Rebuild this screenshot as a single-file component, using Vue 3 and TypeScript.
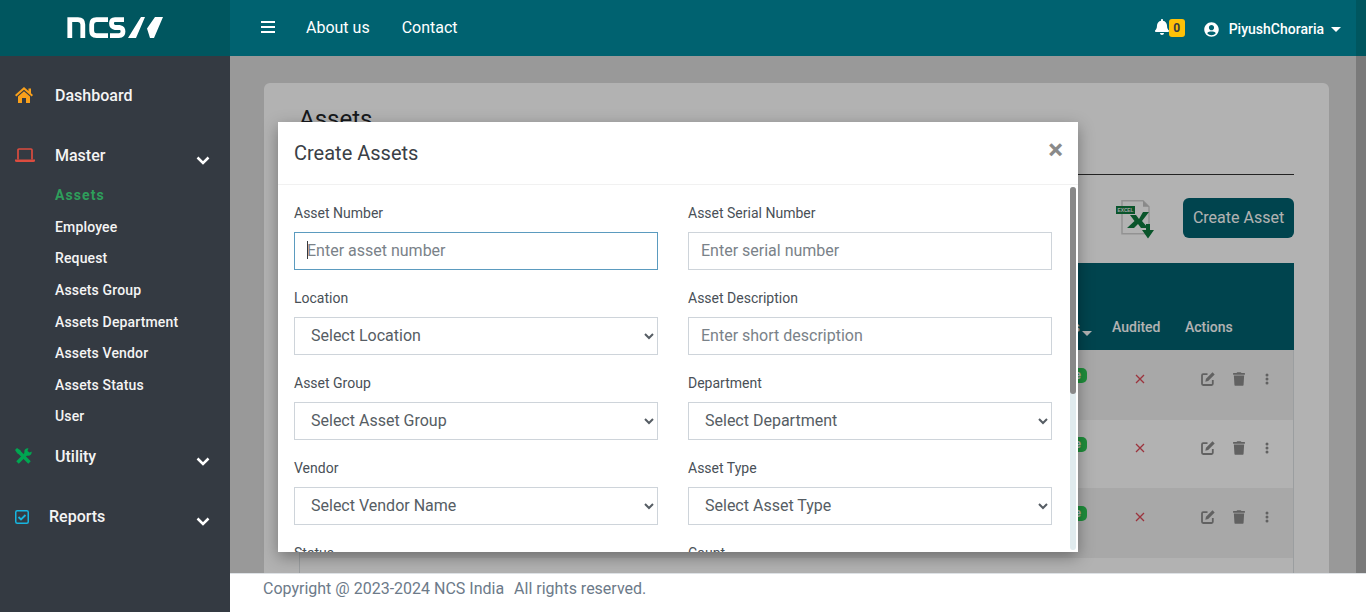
<script setup lang="ts">
const subItems = ['Assets', 'Employee', 'Request', 'Assets Group', 'Assets Department', 'Assets Vendor', 'Assets Status', 'User']

interface Field {
  label: string
  kind: 'input' | 'select'
  text: string
  focused?: boolean
}

const fields: Field[] = [
  { label: 'Asset Number', kind: 'input', text: 'Enter asset number', focused: true },
  { label: 'Asset Serial Number', kind: 'input', text: 'Enter serial number' },
  { label: 'Location', kind: 'select', text: 'Select Location' },
  { label: 'Asset Description', kind: 'input', text: 'Enter short description' },
  { label: 'Asset Group', kind: 'select', text: 'Select Asset Group' },
  { label: 'Department', kind: 'select', text: 'Select Department' },
  { label: 'Vendor', kind: 'select', text: 'Select Vendor Name' },
  { label: 'Asset Type', kind: 'select', text: 'Select Asset Type' },
  { label: 'Status', kind: 'select', text: 'Select Status' },
  { label: 'Count', kind: 'input', text: 'Enter count' },
]

const rows = [1, 2, 3]
</script>

<template>
  <div class="app">
    <aside class="sidebar">
      <div class="brand">
        <svg class="logo" width="100" height="26" viewBox="66 15 100 26" aria-label="NCS">
          <g fill="none" stroke="#fff" stroke-width="4.800">
            <path d="M69.800 38V19.600H78Q82.800 19.600 82.800 24.500V38" />
            <path d="M108 19.600H96.500Q91.700 19.600 91.700 24.500V31Q91.700 35.600 96.500 35.600H108" />
            <path d="M124 19.600H115Q111.500 19.600 111.500 23.300Q111.500 27 115 27.500H120Q123 28 123 31.500Q123 35.600 119 35.600H110" />
          </g>
          <path fill="#fff" d="M128 38 141 17h4l-9 21zM147 28.500 155 17h8l-9 21h-4z" />
        </svg>
      </div>
      <nav class="nav">
        <a class="nav-item">
          <span class="nav-icon">
            <svg width="18" height="16" viewBox="0 0 18 16"><path fill="#f9a01b" d="M9 0 13.500 4V1.500H16V6.200L18 8 16.700 9.500 9 2.800 1.300 9.500 0 8zM3 9.400 9 4.200 15 9.400V16H11V11H7V16H3z" /></svg>
          </span>
          <span>Dashboard</span>
        </a>
        <a class="nav-item">
          <span class="nav-icon">
            <svg width="20" height="15" viewBox="0 0 20 15"><path fill="none" stroke="#dc4c3f" stroke-width="1.700" d="M3 11.500V2q0-1 1-1h12q1 0 1 1v9.500" /><path fill="#dc4c3f" d="M0 11.500h20v1q0 1.500-1.500 1.500h-17Q0 14 0 12.500z" /></svg>
          </span>
          <span>Master</span>
          <svg class="chev" width="14" height="9" viewBox="0 0 14 9"><path fill="none" stroke="#fff" stroke-width="2.500" d="M1.500 1.500 7 7l5.500-5.500" /></svg>
        </a>
        <ul class="sub">
          <li v-for="(s, i) in subItems" :key="s" :class="{ active: i === 0 }">{{ s }}</li>
        </ul>
        <a class="nav-item nav-util">
          <span class="nav-icon">
            <svg width="17" height="17" viewBox="0 0 17 17">
              <g fill="none" stroke="#00a651" stroke-width="3.600">
                <path d="M2.500 2.500 14.500 14.500" />
                <path d="M2.500 14.500 11.500 5.500" />
              </g>
              <path fill="#00a651" d="M0 2 2 0 5.500 2.500 6 5 5 6 2.500 5.500z" />
              <circle cx="13" cy="4" r="3.700" fill="#00a651" />
              <path fill="#343a42" d="M13.500 0 H17 V3.500 L14.500 4.500 12.500 3z" />
            </svg>
          </span>
          <span>Utility</span>
          <svg class="chev" width="14" height="9" viewBox="0 0 14 9"><path fill="none" stroke="#fff" stroke-width="2.500" d="M1.500 1.500 7 7l5.500-5.500" /></svg>
        </a>
        <a class="nav-item nav-reports">
          <span class="nav-icon">
            <svg width="14" height="14" viewBox="0 0 14 14"><rect x=".75" y=".75" width="12.500" height="12.500" rx="1.500" fill="none" stroke="#17b5e0" stroke-width="1.500" /><path fill="none" stroke="#17b5e0" stroke-width="1.800" d="m3.500 7 2.500 2.500L10.500 5" /></svg>
          </span>
          <span>Reports</span>
          <svg class="chev" width="14" height="9" viewBox="0 0 14 9"><path fill="none" stroke="#fff" stroke-width="2.500" d="M1.500 1.500 7 7l5.500-5.500" /></svg>
        </a>
      </nav>
    </aside>

    <div class="right">
      <div class="upper">
        <div class="upper-col">
          <header class="topbar">
            <span class="burger"><i></i><i></i><i></i></span>
            <a class="top-link first">About us</a>
            <a class="top-link">Contact</a>
            <span class="top-right">
              <svg width="14" height="16" viewBox="0 0 448 512"><path fill="#fff" d="M224 512c35.320 0 63.970-28.650 63.970-64H160.030c0 35.350 28.650 64 63.970 64zm215.390-149.710c-19.320-20.760-55.470-51.990-55.470-154.290 0-77.700-54.480-139.900-127.940-155.160V32c0-17.670-14.320-32-31.980-32s-31.980 14.330-31.980 32v20.840C118.560 68.100 64.080 130.300 64.080 208c0 102.300-36.150 133.530-55.470 154.290-6 6.450-8.660 14.160-8.610 21.710.11 16.400 12.980 32 32.100 32h383.800c19.120 0 32-15.600 32.100-32 .05-7.550-2.610-15.270-8.610-21.710z" /></svg>
              <span class="badge">0</span>
              <svg class="user-icon" width="15" height="15" viewBox="0 0 496 512"><path fill="#fff" d="M248 8C111 8 0 119 0 256s111 248 248 248 248-111 248-248S385 8 248 8zm0 96c48.600 0 88 39.400 88 88s-39.400 88-88 88-88-39.400-88-88 39.400-88 88-88zm0 344c-58.700 0-111.300-26.600-146.500-68.200 18.800-35.400 55.600-59.800 98.500-59.800 2.400 0 4.800.4 7.100 1.100 13 4.200 26.600 6.900 40.900 6.900 14.300 0 28-2.700 40.900-6.900 2.300-.7 4.700-1.100 7.100-1.100 42.900 0 79.700 24.400 98.500 59.800C359.300 421.400 306.700 448 248 448z" /></svg>
              <span class="user-name">PiyushChoraria</span>
              <span class="user-caret"></span>
            </span>
          </header>

          <main class="main">
            <section class="card">
              <h1 class="title">Assets</h1>
              <hr class="rule" />
              <div class="tools">
                <svg class="excel" width="40" height="39" viewBox="0 0 40 39">
                  <path fill="none" stroke="#d2d2d2" stroke-width="1.500" d="M7 .8h21l6 6v27H7z" />
                  <path fill="#c4c4c4" d="M28 .8l6 6h-6z" />
                  <path fill="#0f7a3e" d="M12 28 19.500 21 15 15H21L24 19 28 12H34L27 21 33 28H26L23 24 19 28z" />
                  <path fill="#0f7a3e" d="M31 24h4v6h4l-6 8.500L27 30h4z" />
                  <rect x="1" y="6" width="19" height="8" fill="#0f7a3e" />
                  <text x="2.500" y="12" class="excel-text">EXCEL</text>
                </svg>
                <button class="create" type="button">Create Asset</button>
              </div>
              <div class="table">
                <div class="thead">
                  <span>Asset Number</span>
                  <span class="th-status">Status<i class="sort"></i></span>
                  <span>Audited</span>
                  <span>Actions</span>
                </div>
                <div v-for="r in rows" :key="r" class="tr">
                  <span>—</span>
                  <span class="td-status"><b class="pill">Active</b></span>
                  <span class="td-x">
                    <svg width="10" height="10" viewBox="0 0 10 10"><path fill="none" stroke="#e04a58" stroke-width="1.300" d="M1 1l8 8M9 1l-8 8" /></svg>
                  </span>
                  <span class="td-actions">
                    <svg width="14" height="14" viewBox="0 0 14 14"><path fill="none" stroke="#8c8c8c" stroke-width="1.800" d="M6.500 2.200H2.200Q1 2.200 1 3.400v8.400Q1 13 2.200 13h8.400q1.200 0 1.200-1.200V8" /><path fill="#8c8c8c" d="M11.500.3 13.700 2.500 7.200 9 4.300 9.700 5 6.800z" /></svg>
                    <svg width="12" height="14" viewBox="0 0 448 512"><path fill="#8c8c8c" d="M432 32H312l-9.400-18.700A24 24 0 0 0 281.100 0H166.800a23.720 23.720 0 0 0-21.400 13.300L136 32H16A16 16 0 0 0 0 48v32a16 16 0 0 0 16 16h416a16 16 0 0 0 16-16V48a16 16 0 0 0-16-16zM53.200 467a48 48 0 0 0 47.900 45h245.800a48 48 0 0 0 47.900-45L416 128H32z" /></svg>
                    <svg class="kebab" width="4" height="12" viewBox="0 0 4 12"><g fill="#8c8c8c"><circle cx="2" cy="2" r="1.500" /><circle cx="2" cy="6" r="1.500" /><circle cx="2" cy="10" r="1.500" /></g></svg>
                  </span>
                </div>
                <div class="tr tr-last"></div>
              </div>
            </section>

            <div class="backdrop"></div>

            <div class="modal">
              <div class="modal-head">
                <h2>Create Assets</h2>
                <span class="close">×</span>
              </div>
              <div class="modal-body">
                <div v-for="f in fields" :key="f.label" class="field">
                  <label>{{ f.label }}</label>
                  <span v-if="f.kind === 'input'" class="input-wrap">
                    <input class="control" :class="{ focused: f.focused }" type="text" :placeholder="f.text" />
                    <i v-if="f.focused" class="caret"></i>
                  </span>
                  <select v-else class="control select">
                    <option>{{ f.text }}</option>
                  </select>
                </div>
              </div>
              <div class="scroll-track"><div class="scroll-thumb"></div></div>
            </div>
          </main>
        </div>
        <div class="rail">
          <div class="rail-top"></div>
          <div class="rail-rest"></div>
        </div>
      </div>
      <footer class="footer">Copyright @ 2023-2024 NCS India<span class="rights">All rights reserved.</span></footer>
    </div>
  </div>
</template>

<style>
html, body { margin: 0; height: 100%; overflow: hidden; }
</style>

<style scoped>
.app {
  display: flex;
  height: 612px;
  font-family: Roboto, "Liberation Sans", sans-serif;
  font-size: 16px;
  overflow: hidden;
}

.sidebar {
  width: 230px;
  flex: none;
  background: #343a42;
  color: #f4f4f4;
}
.brand {
  height: 56px;
  background: #00565f;
  display: flex;
  align-items: center;
  padding-left: 66px;
  box-sizing: border-box;
}
.logo { display: block; }
.nav { padding-top: 19px; }
.nav-item {
  display: flex;
  align-items: center;
  height: 40px;
  margin-bottom: 20px;
  padding-left: 15px;
  font-weight: 500;
  position: relative;
}
.nav-item:nth-of-type(2) { margin-bottom: 0; }
.nav-icon {
  width: 40px;
  flex: none;
  display: flex;
  align-items: center;
}
.nav-reports .nav-icon { width: 34px; }
.chev {
  position: absolute;
  left: 196px;
  top: 21px;
}
.nav-util .chev, .nav-reports .chev { top: 20px; }
.sub {
  list-style: none;
  margin: 0;
  padding: 5.200px 0 4px 55px;
  font-size: 14px;
  font-weight: 500;
  letter-spacing: 0.150px;
}
.sub li {
  height: 31.600px;
  line-height: 31.600px;
}
.sub li.active {
  color: #2e9e5b;
  font-weight: 700;
  letter-spacing: 1.100px;
}

.right {
  flex: 1;
  min-width: 0;
  display: flex;
  flex-direction: column;
}
.upper {
  flex: 1;
  min-height: 0;
  display: flex;
}
.upper-col {
  flex: 1;
  min-width: 0;
  display: flex;
  flex-direction: column;
}
.rail {
  width: 10px;
  flex: none;
  display: flex;
  flex-direction: column;
}
.rail-top { height: 56px; background: #00565f; }
.rail-rest { flex: 1; background: #7a7a7a; }

.topbar {
  height: 56px;
  flex: none;
  background: #006270;
  color: #fff;
  display: flex;
  align-items: center;
  padding-left: 31px;
  box-sizing: border-box;
}
.burger {
  width: 14px;
  display: flex;
  flex-direction: column;
  gap: 3px;
  margin: -2px 31px 0 0;
}
.burger i {
  display: block;
  height: 2px;
  background: #fff;
}
.top-link {
  margin: -2px 32px 0 0;
}
.top-right {
  margin-left: auto;
  margin-right: 15px;
  display: flex;
  align-items: center;
}
.top-right > svg:first-child { margin-top: -3px; }
.badge {
  width: 16px;
  height: 18px;
  border-radius: 3px;
  background: #ffc107;
  color: #343a40;
  font-size: 12px;
  font-weight: 700;
  line-height: 18px;
  text-align: center;
  margin-top: -1px;
}
.user-icon { margin-left: 19px; margin-top: 2px; }
.user-name {
  margin-left: 10px;
  margin-top: 2px;
  font-size: 14px;
  font-weight: 500;
}
.user-caret {
  margin-left: 7px;
  margin-top: 3px;
  border: 5px solid transparent;
  border-top-color: #fff;
  border-bottom: 0;
}

.main {
  flex: 1;
  min-height: 0;
  position: relative;
  overflow: hidden;
  background: #dcdcdc;
  padding: 27px 27px 0 34px;
}
.card {
  background: #fff;
  border-radius: 6px;
  padding: 20px 35px 0;
  height: 600px;
  box-sizing: border-box;
}
.title {
  margin: 0;
  font-size: 24px;
  font-weight: 400;
  line-height: 32px;
  color: #212529;
}
.rule {
  margin: 39px 0 0;
  border: 0;
  border-top: 1px solid #333;
}
.tools {
  display: flex;
  justify-content: flex-end;
  align-items: center;
  height: 40px;
  margin-top: 23px;
}
.excel { margin-right: 28px; margin-top: 2px; }
.excel-text {
  font-family: "Liberation Sans", sans-serif;
  font-size: 4.800px;
  font-weight: 700;
  fill: #e8e8e8;
}
.create {
  width: 111px;
  height: 40px;
  border: 0;
  border-radius: 6px;
  background: #006270;
  color: #fff;
  font: 400 16px Roboto, sans-serif;
  padding: 0 0 2px;
}
.table {
  margin-top: 25px;
  border-right: 1px solid #dee2e6;
  border-left: 1px solid #dee2e6;
  font-size: 14px;
}
.thead, .tr {
  display: grid;
  grid-template-columns: 650px 150px 73px 120px;
}
.thead {
  height: 87px;
  background: #006270;
  color: #fff;
  font-weight: 500;
  align-items: center;
  margin: 0 -1px;
  padding: 0 1px;
  padding-top: 41px;
  box-sizing: border-box;
}
.thead > span { padding-left: 12px; }
.th-status {
  position: relative;
  text-align: right;
  padding-right: 20px;
}
.sort {
  position: absolute;
  right: 8px;
  top: 12px;
  border: 5px solid transparent;
  border-top-color: #fff;
  border-bottom: 0;
}
.tr {
  height: 70px;
  background: #f1f1f1;
  padding-bottom: 13px;
  box-sizing: border-box;
  align-items: center;
}
.tr:nth-child(odd) { background: #fff; height: 68px; }
.tr-last { height: 20px !important; padding: 0; }
.td-status {
  grid-column: 2;
  padding-right: 13px;
}
.pill {
  display: block;
  width: fit-content;
  margin: -7px 0 0 auto;
  height: 15px;
  line-height: 15px;
  padding: 0 6px;
  border-radius: 5px;
  background: #2dcc55;
  color: #fff;
  font-size: 12px;
  font-weight: 700;
}
.td-x {
  display: flex;
  justify-content: center;
  padding-left: 7px;
  box-sizing: border-box;
}
.td-actions {
  display: flex;
  align-items: center;
  padding-left: 28px;
  gap: 18px;
}
.kebab { margin-left: 2px; }

.backdrop {
  position: absolute;
  inset: 0;
  background: rgba(0, 0, 0, 0.3);
}
.modal {
  position: absolute;
  left: 48px;
  top: 66px;
  width: 800px;
  height: 430px;
  background: #fff;
  box-shadow: 0 5px 15px rgba(0, 0, 0, 0.35);
  display: flex;
  flex-direction: column;
}
.modal-head {
  height: 63px;
  flex: none;
  box-sizing: border-box;
  border-bottom: 1px solid #f1f1f1;
  padding: 0 16px;
  display: flex;
  align-items: center;
  justify-content: space-between;
}
.modal-head h2 {
  margin: 0;
  font-size: 20px;
  font-weight: 400;
  color: #3a4046;
}
.close {
  font-size: 28px;
  font-weight: 700;
  line-height: 1;
  color: #8a8a8a;
  margin: -6px -1px 0 0;
}
.modal-body {
  flex: 1;
  min-height: 0;
  overflow: hidden;
  display: grid;
  grid-template-columns: 364px 364px;
  column-gap: 30px;
  row-gap: 18px;
  align-content: start;
  padding: 18px 18px 0 16px;
  box-sizing: border-box;
}
.scroll-track {
  position: absolute;
  left: 792px;
  top: 65px;
  width: 6px;
  height: 363px;
  border-radius: 3px;
  background: #e0ebee;
}
.scroll-thumb {
  height: 207px;
  border-radius: 3px;
  background: #888;
}
.field label {
  display: block;
  font-size: 14px;
  line-height: 21px;
  margin-bottom: 8px;
  color: #495057;
}
.input-wrap {
  display: block;
  position: relative;
}
.control {
  display: block;
  width: 100%;
  height: 38px;
  box-sizing: border-box;
  border: 1px solid #ced4da;
  border-radius: 0;
  background: #fff;
  color: #565d64;
  font: 400 16px Roboto, sans-serif;
  padding: 0 12px 2px;
  outline: 0;
}
.control::placeholder { color: #7a8289; opacity: 1; }
.control.focused { border-color: #5b9bbf; }
.caret {
  position: absolute;
  left: 13px;
  top: 9px;
  width: 1px;
  height: 18px;
  background: #343a40;
}

.footer {
  height: 39px;
  flex: none;
  box-sizing: border-box;
  background: #fff;
  border-top: 1px solid #dee2e6;
  padding-left: 33px;
  line-height: 29px;
  color: #6c7a89;
}
.rights { margin-left: 10px; }
</style>
